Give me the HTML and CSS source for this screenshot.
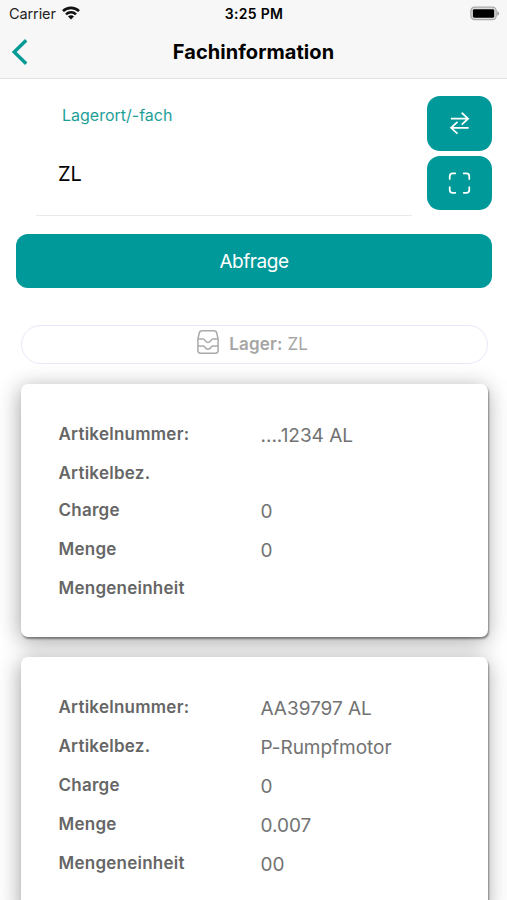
FILE: index.html
```html
<!DOCTYPE html>
<html lang="de">
<head>
<meta charset="utf-8">
<title>Fachinformation</title>
<link rel="stylesheet" href="styles.css">
</head>
<body>
<header class="header">
  <div class="status">
    <div class="status-left"><span class="carrier">Carrier</span>
      <svg class="wifi" viewBox="0 0 18 14" fill="none" stroke="#111" stroke-width="2.6"><path d="M1 5.2C5.3.7 12.7.7 17 5.2M4 8.4c2.800-2.800 7.200-2.800 10 0"/><path d="M6 10.600c1.600-1.700 4.400-1.700 6 0l-3 3z" fill="#111" stroke="none"/></svg>
    </div>
    <span class="time">3:25 PM</span>
    <svg class="battery" viewBox="0 0 31 15"><rect x=".9" y=".9" width="26.2" height="13" rx="4" fill="#ddd" stroke="#aaa" stroke-width="1.3"/><rect x="3" y="3" width="22" height="8.8" rx="1.5" fill="#000"/><path d="M28.2 5.2c2.5.8 2.5 3.8 0 4.6z" fill="#999"/></svg>
  </div>
  <div class="nav">
    <svg class="back" viewBox="0 0 18 28" fill="none" stroke="#079b98" stroke-width="3.4"><path d="M15.2 2.2 3.2 14l12 11.8"/></svg>
    <h1 class="title">Fachinformation</h1>
    <span></span>
  </div>
</header>
<main>
  <section class="search">
    <div class="field">
      <label class="field-label" for="place">Lagerort/-fach</label>
      <div class="field-value" id="place">ZL</div>
    </div>
    <div class="tools">
      <button class="tool" aria-label="Wechseln"><svg class="tool-icon" viewBox="0 0 24 24" fill="none" stroke="#fff" stroke-width="1.8"><path d="M3 7.5h18M14.300 1.300l6.700 6.200-6.700 6.200M21.500 17H3.500M9.900 10.800 3.200 17l6.700 6.200"/></svg></button>
      <button class="tool" aria-label="Scannen"><svg class="tool-icon" viewBox="0 0 24 24" fill="none" stroke="#fff" stroke-width="1.8" stroke-linecap="round"><path d="M1.8 7.8V5q0-3 3-3h2.8M16.4 2h2.8q3 0 3 3v2.8M22.2 16.4v2.8q0 3-3 3h-2.8M7.6 22.2H4.8q-3 0-3-3v-2.8"/></svg></button>
    </div>
  </section>
  <button class="submit"><span class="submit-text">Abfrage</span></button>
  <div class="chip">
    <svg class="tray" viewBox="0 0 22 24" fill="none" stroke="#aaa" stroke-width="1.5" stroke-linejoin="round"><path d="M.9 9 2.300 3Q2.800.8 5 .8h12q2.200 0 2.700 2.200L21.100 9v11.600q0 2.600-2.600 2.600h-15Q.9 23.200.9 20.600zM.9 9h5.400c1.700 0 1.700 3.400 4.700 3.400s3-3.400 4.700-3.400h5.400M.9 16h5.400c1.700 0 1.700 3.200 4.700 3.200s3-3.200 4.700-3.200h5.400"/></svg>
    <b class="chip-label">Lager:</b><span class="chip-value">ZL</span>
  </div>
  <div class="cards">
    <dl class="card card-front">
      <div class="row"><dt>Artikelnummer:</dt><dd>....1234 AL</dd></div>
      <div class="row row-empty"><dt>Artikelbez.</dt><dd></dd></div>
      <div class="row"><dt>Charge</dt><dd>0</dd></div>
      <div class="row"><dt>Menge</dt><dd>0</dd></div>
      <div class="row row-empty"><dt>Mengeneinheit</dt><dd></dd></div>
    </dl>
    <dl class="card">
      <div class="row"><dt>Artikelnummer:</dt><dd>AA39797 AL</dd></div>
      <div class="row"><dt>Artikelbez.</dt><dd>P-Rumpfmotor</dd></div>
      <div class="row"><dt>Charge</dt><dd>0</dd></div>
      <div class="row"><dt>Menge</dt><dd>0.007</dd></div>
      <div class="row"><dt>Mengeneinheit</dt><dd>00</dd></div>
    </dl>
  </div>
</main>
</body>
</html>
```
FILE: styles.css
```css
* { box-sizing: border-box; }
body { margin: 0; height: 900px; overflow: hidden; background: #fff; font-family: Inter, "Liberation Sans", sans-serif; color: #000; }
button { border: 0; padding: 0; font: inherit; }
.header { height: 79px; background: #f7f7f7; border-bottom: 1px solid #e2e2e2; }
.status { height: 27px; padding: 0 7px 0 9px; display: grid; grid-template-columns: 1fr auto 1fr; align-items: center; font-size: 14px; line-height: 27px; }
.status-left { display: flex; align-items: center; gap: 6px; color: #222; margin-top: -1px; }
.carrier { font-size: 14.5px; letter-spacing: -.1px; }
.wifi { width: 18px; height: 14px; }
.time { font-weight: 600; letter-spacing: .3px; margin-left: -1px; }
.battery { width: 30px; height: 15px; justify-self: end; }
.nav { height: 50px; padding: 0 12px; display: grid; grid-template-columns: 1fr auto 1fr; align-items: center; }
.back { width: 18px; height: 28px; margin-left: -1px; }
.title { margin: 0; font-size: 20px; font-weight: 700; letter-spacing: .05px; line-height: 24px; }
.search { display: flex; justify-content: space-between; padding: 17px 15px 0 36px; }
.field { width: 376px; height: 120px; border-bottom: 1px solid #e9e9eb; display: flex; flex-direction: column; }
.field-label { margin: 8px 0 0 26px; font-size: 16px; line-height: 22px; color: #1d9f98; }
.field-value { margin: 35px 0 0 22px; font-size: 20px; line-height: 26px; }
.tools { display: grid; gap: 5px; align-content: start; }
.tool { width: 65px; height: 54.500px; border-radius: 13px; background: #009999; display: grid; place-items: center; }
.tool-icon { width: 23px; height: 24px; }
.submit { display: block; width: 476px; height: 54px; margin: 18px 15px 0 16px; border-radius: 12px; background: #009999; color: #fff; font-size: 19px; letter-spacing: -.45px; }
.chip { height: 39px; margin: 37px 19px 0 21px; border: 1px solid #e8e8fb; border-radius: 20px; display: flex; align-items: center; justify-content: center; color: #a5a5a5; font-size: 17px; line-height: 24px; }
.tray { width: 22px; height: 24px; margin: -5px 10px 0 -4px; }
.chip-label { font-weight: 600; margin-right: 5px; margin-top: -2px; letter-spacing: .2px; }
.chip-value { margin-top: -2px; }
.cards { padding: 20px 19px 0 21px; display: grid; gap: 20px; }
.card { position: relative; margin: 0; padding: 30px 37px 32px 37.500px; border-radius: 7px; background: #fff; box-shadow: 1px 2px 2px rgba(0,0,0,.4), -1px 4px 22px rgba(0,0,0,.36); }
.card-front { z-index: 1; clip-path: inset(-40px -40px -20px -40px); }
.row { display: grid; grid-template-columns: 202px 1fr; height: 39px; align-items: center; }
.row-empty { height: 37px; padding-top: 2px; }
dt { font-size: 17px; line-height: 24px; font-weight: 600; letter-spacing: .25px; color: #666; }
dd { margin: 5.500px 0 0; font-size: 19px; line-height: 26px; letter-spacing: -.03px; color: #727272; }
```
